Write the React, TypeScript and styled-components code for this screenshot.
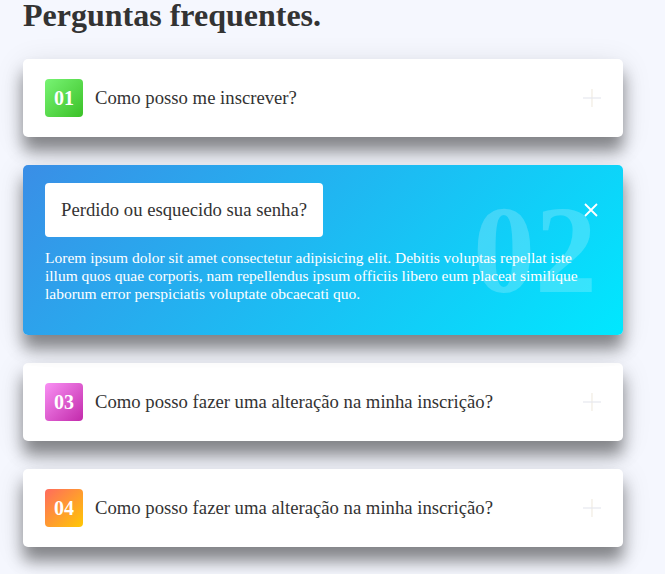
import { ReactElement } from "react";
import styled, { createGlobalStyle } from "styled-components";

const GlobalStyle = createGlobalStyle`
  html, body {
    margin: 0;
    padding: 0;
    background: #f5f7fe;
    font-family: "Liberation Serif", "Times New Roman", serif;
  }
`;

type Faq = {
  num: string;
  question: string;
  badge: [string, string];
  open?: boolean;
};

const faqs: Faq[] = [
  { num: "01", question: "Como posso me inscrever?", badge: ["#78f474", "#3bc127"] },
  {
    num: "02",
    question: "Perdido ou esquecido sua senha?",
    badge: ["#3a8ee6", "#00e8ff"],
    open: true,
  },
  {
    num: "03",
    question: "Como posso fazer uma alteração na minha inscrição?",
    badge: ["#f990f4", "#c22aab"],
  },
  {
    num: "04",
    question: "Como posso fazer uma alteração na minha inscrição?",
    badge: ["#ff6b5e", "#ffc804"],
  },
];

const answer =
  "Lorem ipsum dolor sit amet consectetur adipisicing elit. Debitis voluptas repellat iste illum quos quae corporis, nam repellendus ipsum officiis libero eum placeat similique laborum error perspiciatis voluptate obcaecati quo.";

function PlusIcon(): ReactElement {
  return (
    <svg width="18" height="18" viewBox="0 0 18 18">
      <line x1="9" y1="0" x2="9" y2="18" stroke="#f1ece2" strokeWidth="1.2" />
      <line x1="0" y1="9" x2="18" y2="9" stroke="#e6e8ee" strokeWidth="1.2" />
    </svg>
  );
}

function CloseIcon(): ReactElement {
  return (
    <svg width="14" height="14" viewBox="0 0 14 14">
      <path d="M1 1 L13 13 M13 1 L1 13" stroke="#fff" strokeWidth="1.8" />
    </svg>
  );
}

export default function App(): ReactElement {
  return (
    <StyledPage>
      <GlobalStyle />
      <StyledTitle>Perguntas frequentes.</StyledTitle>
      <StyledList>
        {faqs.map((faq, i) =>
          faq.open ? (
            <StyledOpenCard key={i} $from={faq.badge[0]} $to={faq.badge[1]}>
              <StyledBigNumber>{faq.num}</StyledBigNumber>
              <StyledOpenHeader>
                <StyledQuestionBox>{faq.question}</StyledQuestionBox>
                <StyledClose>
                  <CloseIcon />
                </StyledClose>
              </StyledOpenHeader>
              <StyledAnswer>{answer}</StyledAnswer>
            </StyledOpenCard>
          ) : (
            <StyledCard key={i}>
              <StyledBadge $from={faq.badge[0]} $to={faq.badge[1]}>
                {faq.num}
              </StyledBadge>
              <StyledQuestion>{faq.question}</StyledQuestion>
              <StyledToggle>
                <PlusIcon />
              </StyledToggle>
            </StyledCard>
          )
        )}
      </StyledList>
    </StyledPage>
  );
}

const StyledPage = styled.div`
  padding: 0 42px 40px 23px;
  width: 600px;
`;

const StyledTitle = styled.h1`
  color: #333;
  font-size: 32px;
  font-weight: 700;
  line-height: 34px;
  margin: -2px 0 27px;
`;

const StyledList = styled.div`
  display: flex;
  flex-direction: column;
  gap: 28px;
`;

const cardShadow = `
  box-shadow: 0 14px 16px rgba(0, 0, 0, 0.42), 0 6px 30px rgba(0, 0, 0, 0.12);
`;

const StyledCard = styled.div`
  align-items: center;
  background: #fff;
  border-radius: 5px;
  box-sizing: border-box;
  display: flex;
  height: 78px;
  padding: 0 22px;
  ${cardShadow}
`;

const StyledBadge = styled.div<{ $from: string; $to: string }>`
  align-items: center;
  background: linear-gradient(135deg, ${(p) => p.$from}, ${(p) => p.$to});
  border-radius: 4px;
  color: #fff;
  display: flex;
  flex-shrink: 0;
  font-size: 20px;
  font-weight: 700;
  height: 38px;
  justify-content: center;
  width: 38px;
`;

const StyledQuestion = styled.div`
  color: #333;
  flex: 1;
  font-size: 18.7px;
  margin-left: 12px;
`;

const StyledToggle = styled.div`
  display: flex;
`;

const StyledOpenCard = styled.div<{ $from: string; $to: string }>`
  background: linear-gradient(135deg, ${(p) => p.$from}, ${(p) => p.$to});
  border-radius: 5px;
  box-sizing: border-box;
  height: 170px;
  overflow: hidden;
  padding: 18px 22px 0;
  position: relative;
  ${cardShadow}
`;

const StyledBigNumber = styled.div`
  color: rgba(255, 255, 255, 0.2);
  font-size: 124px;
  font-weight: 700;
  line-height: 1;
  position: absolute;
  right: 26px;
  top: 24px;
`;

const StyledOpenHeader = styled.div`
  align-items: flex-start;
  display: flex;
  justify-content: space-between;
  position: relative;
`;

const StyledQuestionBox = styled.div`
  background: #fff;
  border-radius: 4px;
  color: #333;
  font-size: 18.7px;
  line-height: 22px;
  padding: 16px;
`;

const StyledClose = styled.div`
  display: flex;
  margin-right: 3px;
  margin-top: 20px;
`;

const StyledAnswer = styled.p`
  color: #fff;
  font-size: 15.5px;
  line-height: 18px;
  margin: 12px 0 0;
  position: relative;
`;
